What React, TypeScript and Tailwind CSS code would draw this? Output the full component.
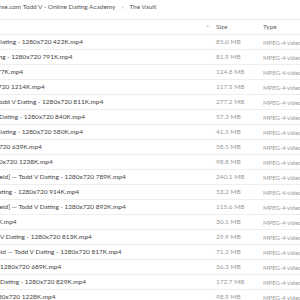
import React from 'react';

interface FileRow {
  name: string;
  shift: number;
  size: string;
}

const files: FileRow[] = [
  { name: 'Dating - 1280x720 422K.mp4', shift: -3, size: '85.0 MB' },
  { name: 'ing - 1280x720 791K.mp4', shift: -3, size: '81.9 MB' },
  { name: '77K.mp4', shift: -3, size: '124.8 MB' },
  { name: '720 1214K.mp4', shift: -2, size: '117.5 MB' },
  { name: 'Todd V Dating - 1280x720 811K.mp4', shift: -4, size: '277.2 MB' },
  { name: 'Dating - 1280x720 840K.mp4', shift: -1, size: '57.3 MB' },
  { name: 'Dating - 1280x720 580K.mp4', shift: -3, size: '41.5 MB' },
  { name: '720 639K.mp4', shift: -1, size: '58.5 MB' },
  { name: '0x720 1238K.mp4', shift: -1, size: '98.8 MB' },
  { name: 'ield] — Todd V Dating - 1280x720 789K.mp4', shift: -2, size: '240.1 MB' },
  { name: 'ating - 1280x720 914K.mp4', shift: -2, size: '53.2 MB' },
  { name: 'ield] — Todd V Dating - 1280x720 892K.mp4', shift: -2, size: '115.6 MB' },
  { name: 'K.mp4', shift: -2, size: '30.1 MB' },
  { name: 'V Dating - 1280x720 813K.mp4', shift: 0, size: '29.9 MB' },
  { name: 'old — Todd V Dating - 1280x720 817K.mp4', shift: -3, size: '71.2 MB' },
  { name: '1280x720 689K.mp4', shift: 0, size: '36.3 MB' },
  { name: 'Dating - 1280x720 829K.mp4', shift: 0, size: '172.7 MB' },
  { name: '80x720 1228K.mp4', shift: -2, size: '98.9 MB' },
];

export default function App() {
  return (
    <div className="w-[300px] h-[300px] overflow-hidden bg-white text-[6.5px] font-['Lato',sans-serif]">
      <div className="h-[20px] border-b border-[#eeeeee] flex items-start pt-[3px] whitespace-nowrap text-[#555] leading-[8px]">
        <span className="ml-[-1px]">rse.com Todd V - Online Dating Academy</span>
        <span className="mx-[6px] text-[#888]">›</span>
        <span>The Vault</span>
      </div>
      <div className="h-[15px] border-b border-[#eeeeee] flex items-center text-[#666]">
        <div className="flex-1" />
        <div className="w-[11px] text-[#999] text-[6px]">⌃</div>
        <div className="w-[47px]">Size</div>
        <div className="w-[37px] whitespace-nowrap">Type</div>
      </div>
      {files.map((f, i) => (
        <div key={i} className="h-[15px] border-b border-[#eeeeee] flex items-center whitespace-nowrap">
          <div className="flex-1 overflow-hidden text-[#444]">
            <span style={{ marginLeft: f.shift }}>{f.name}</span>
          </div>
          <div className="w-[11px]" />
          <div className="w-[47px] text-[#9a9a9a]">{f.size}</div>
          <div className="w-[37px] text-[#9a9a9a] text-[6px]">MPEG-4 video</div>
        </div>
      ))}
      <div className="h-px bg-[#cfe1f1]" />
    </div>
  );
}
